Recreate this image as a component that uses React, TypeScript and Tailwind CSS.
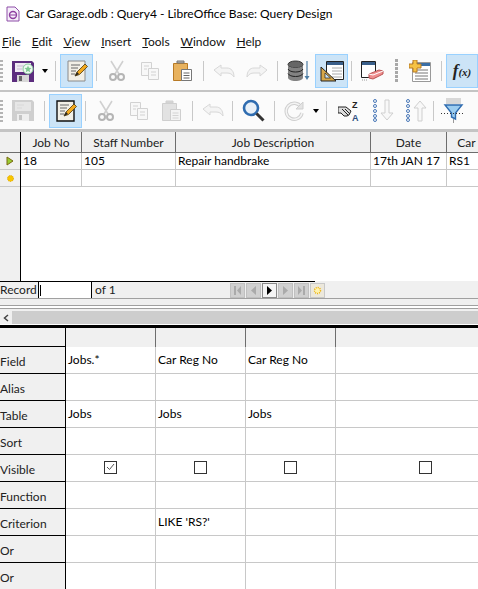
import type { ReactNode } from "react";

const font = "font-['Lato','Open_Sans',sans-serif]";

function Slot({ w, active, children }: { w: string; active?: boolean; children?: ReactNode }) {
  return (
    <div
      className={`${w} h-[34px] shrink-0 flex items-center justify-center ${
        active ? "bg-[#cce4f7] outline outline-1 -outline-offset-1 outline-[#99d1ff]" : ""
      }`}
    >
      {children}
    </div>
  );
}

function Sep({ w }: { w: string }) {
  return (
    <div className={`${w} shrink-0 flex justify-center`}>
      <div className="w-px h-[20px] bg-[#c8c8c8]" />
    </div>
  );
}

function Drop({ w }: { w: string }) {
  return (
    <div className={`${w} shrink-0 flex justify-center`}>
      <div className="w-0 h-0 border-x-[3.5px] border-x-transparent border-t-[4px] border-t-black" />
    </div>
  );
}

function Grip() {
  return (
    <div className="w-[6px] shrink-0 flex flex-col gap-[2px] items-start">
      {[0, 1, 2, 3, 4, 5].map((i) => (
        <div key={i} className="w-[3px] h-[2px] bg-[#b4b4b4]" />
      ))}
    </div>
  );
}

function SaveIcon({ dim }: { dim?: boolean }) {
  const body = dim ? "#cfcfcf" : "#5c2d7e";
  return (
    <svg width="24" height="23" viewBox="0 0 24 23">
      <path d="M1 1h20l2 2v19H1z" fill={body} />
      <rect x="4" y="3" width="16" height="9" fill={dim ? "#e6e6e6" : "#efeaf2"} />
      <path d="M6 6h7M6 9h5" stroke={dim ? "#d8d8d8" : "#c9bcd4"} />
      <rect x="6" y="15" width="12" height="7" fill={dim ? "#eeeeee" : "#d8d8d8"} />
      <rect x="8" y="16" width="3" height="5" fill={dim ? "#c4c4c4" : "#666"} />
      {!dim && (
        <>
          <circle cx="17" cy="9" r="5" fill="#f0faf2" stroke="#86cc9a" />
          <path d="M17 5.500l1 2.300 2.500.3-1.900 1.700.5 2.500-2.100-1.300-2.200 1.300.5-2.500-1.800-1.700 2.500-.3z" fill="#7fc893" />
        </>
      )}
    </svg>
  );
}

function EditIcon({ dark }: { dark?: boolean }) {
  return (
    <svg width="22" height="24" viewBox="0 0 22 24">
      <path d="M2 2h17v20H2z" fill="#f2efe6" stroke={dark ? "#111" : "#8a8a8a"} strokeWidth={dark ? 1.4 : 1} />
      <path d="M5 6h9M5 9h7M5 12h5M5 15h4" stroke="#666" />
      <path d="M9 17l2-4 8-8 2.500 2.500-8 8z" fill="#f2a81d" stroke="#4a3a10" strokeWidth=".8" />
      <path d="M9 17l2-4 2 2z" fill="#222" />
    </svg>
  );
}

function Scissors() {
  return (
    <svg width="18" height="22" viewBox="0 0 18 22" fill="none" stroke="#d0d0d0" strokeWidth="1.600">
      <path d="M3 1l8 13M15 1L7 14" />
      <circle cx="5" cy="17" r="3" stroke="#b5b5b5" strokeWidth="2" />
      <circle cx="13" cy="17" r="3" stroke="#b5b5b5" strokeWidth="2" />
    </svg>
  );
}

function CopyIcon() {
  return (
    <svg width="20" height="20" viewBox="0 0 20 20" fill="#f8f8f8" stroke="#d2d2d2">
      <path d="M1.500 1.500h10v13h-10z" />
      <path d="M8.500 7.500h10v11h-10z" />
      <path d="M4 5h5M4 8h3M11 11h5M11 14h5" />
    </svg>
  );
}

function PasteIcon({ dim }: { dim?: boolean }) {
  return (
    <svg width="21" height="22" viewBox="0 0 21 22">
      <path d="M1.500 3.500h14v17h-14z" fill={dim ? "#e2e2e2" : "#e8b25e"} stroke={dim ? "#cfcfcf" : "#b87a25"} />
      <path d="M5 3h7V1H5z" fill={dim ? "#d8d8d8" : "#bbb"} stroke={dim ? "#cfcfcf" : "#777"} />
      <path d="M9.500 9.500h10v11h-10z" fill={dim ? "#f4f4f4" : "#fff"} stroke={dim ? "#cfcfcf" : "#777"} />
      <path d="M11.500 13h6M11.500 15.500h6M11.500 18h6" stroke={dim ? "#d4d4d4" : "#666"} />
    </svg>
  );
}

function ArrowIcon({ flip }: { flip?: boolean }) {
  return (
    <svg width="22" height="15" viewBox="0 0 22 15" className={flip ? "-scale-x-100" : ""}>
      <path d="M1 6l7-5v3h6c4 0 7 3 7 9-2-3-4-4-7-4H8v3z" fill="#f4f4f4" stroke="#d8d8d8" />
    </svg>
  );
}

function DbIcon() {
  return (
    <svg width="23" height="22" viewBox="0 0 23 22">
      <ellipse cx="8.500" cy="4.500" rx="7.500" ry="3.500" fill="#666" stroke="#333" />
      <path d="M1 4.500v13c0 2 3.500 3.500 7.500 3.500s7.500-1.500 7.500-3.500v-13c0 2-3.500 3.500-7.500 3.500S1 6.500 1 4.500z" fill="#828282" />
      <path d="M1 9c1 2 4 3 7.500 3s6.500-1 7.500-3M1 13.500c1 2 4 3 7.500 3s6.500-1 7.500-3" fill="none" stroke="#222" />
      <path d="M20 1v17" stroke="#4d7ea5" strokeWidth="1.200" />
      <path d="M17.500 16h5L20 20z" fill="#4d7ea5" />
    </svg>
  );
}

function DesignIcon() {
  return (
    <svg width="24" height="22" viewBox="0 0 24 22">
      <path d="M6.500 1.500h17v18h-17z" fill="#fff" stroke="#222" />
      <path d="M7 2h16v3H7z" fill="#3a5f8a" />
      <path d="M12 8h10M12 11h10M12 14h10M12 17h10" stroke="#aaa" />
      <path d="M1 21V7l15 14z" fill="#d8a84a" stroke="#222" />
      <path d="M5 18v-5l5.500 5z" fill="#cce4f7" stroke="#222" strokeWidth=".7" />
    </svg>
  );
}

function EraseIcon() {
  return (
    <svg width="24" height="22" viewBox="0 0 24 22">
      <path d="M1.500 1.500h14v16h-14z" fill="#fff" stroke="#222" />
      <path d="M2 2h13v3H2z" fill="#3a5f8a" />
      <path d="M9 14l10-4 4 1v3l-10 5-4-1z" fill="#ee8d8d" stroke="#b55" />
      <path d="M9 14l4 1 10-4" fill="none" stroke="#fff" />
      <path d="M2 20h6" stroke="#999" strokeDasharray="1 1" />
    </svg>
  );
}

function TableAddIcon() {
  return (
    <svg width="22" height="22" viewBox="0 0 22 22">
      <path d="M3.500 2.500h18v19h-18z" fill="#fff" stroke="#999" />
      <path d="M4 3h17v3H4z" fill="#3a6ea5" />
      <path d="M6 10h13M6 13h13M6 16h13M6 19h13" stroke="#777" />
      <path d="M4 0h4v4h4v4H8v4H4V8H0V4h4z" fill="#f5c244" stroke="#b87a25" />
    </svg>
  );
}

function SearchIcon() {
  return (
    <svg width="23" height="23" viewBox="0 0 23 23" fill="none">
      <circle cx="9" cy="9" r="7" fill="#e8f0f8" stroke="#2f6cb0" strokeWidth="2.600" />
      <path d="M14.500 14.500l7 7" stroke="#333" strokeWidth="3" />
    </svg>
  );
}

function RefreshIcon() {
  return (
    <svg width="20" height="20" viewBox="0 0 20 20" fill="none">
      <path d="M17 6a8 8 0 1 0 1 6" stroke="#cfcfcf" strokeWidth="3.400" />
      <path d="M17 6a8 8 0 1 0 1 6" stroke="#f4f4f4" strokeWidth="1.400" />
      <path d="M19 1v7h-7z" fill="#e4e4e4" stroke="#cfcfcf" />
    </svg>
  );
}

function SortIcon() {
  return (
    <svg width="22" height="22" viewBox="0 0 22 22">
      <path d="M0 7h8l5 4-1 2-1 2-2 1H6L3 13H0z" fill="#dcdcdc" stroke="#222" />
      <path d="M4 9l6 6M7 9l5 5" stroke="#222" />
      <text x="14" y="8" fontSize="9" fontWeight="700" fill="#222" fontFamily="Liberation Sans">Z</text>
      <text x="14" y="21" fontSize="9" fontWeight="700" fill="#2f4f7f" fontFamily="Liberation Sans">A</text>
    </svg>
  );
}

function OrderIcon({ up }: { up?: boolean }) {
  return (
    <svg width="22" height="23" viewBox="0 0 22 23" fill="none">
      {[2, 7, 12, 17, 21].map((y) => (
        <circle key={y} cx="3" cy={y} r="1.500" stroke="#4a78b8" />
      ))}
      <path
        d={up ? "M15 2l6 7h-4v13h-4V9H9z" : "M15 21l6-7h-4V1h-4v13H9z"}
        fill="#f8f8f8"
        stroke="#cfcfcf"
      />
    </svg>
  );
}

function FilterIcon() {
  return (
    <svg width="24" height="25" viewBox="0 0 24 25">
      <path d="M5 0h15v6H5z" fill="#d8d8d8" />
      <path d="M4 7h17l-6.500 8v6l-4-2v-4z" fill="#9ccdf0" stroke="#2f6cb0" strokeWidth="1.400" />
      <path d="M0 15.500h24" stroke="#333" strokeDasharray="1 2" />
      <path d="M12.500 21v4" stroke="#999" />
    </svg>
  );
}

function Toolbars() {
  return (
    <div className="bg-[#fbfbfb]">
      <div className="h-[40px] flex items-center border-b-2 border-[#c4c4c4]">
        <Grip />
        <Slot w="w-[34px]"><SaveIcon /></Slot>
        <Drop w="w-[10px]" />
        <Sep w="w-[10px]" />
        <Slot w="w-[33px]" active><EditIcon /></Slot>
        <Sep w="w-[7px]" />
        <Slot w="w-[33px]"><Scissors /></Slot>
        <Slot w="w-[33px]"><CopyIcon /></Slot>
        <Slot w="w-[33px]"><PasteIcon /></Slot>
        <Sep w="w-[8px]" />
        <Slot w="w-[33px]"><ArrowIcon /></Slot>
        <Slot w="w-[33px]"><ArrowIcon flip /></Slot>
        <Sep w="w-[8px]" />
        <Slot w="w-[34px]"><DbIcon /></Slot>
        <Slot w="w-[33px]" active><DesignIcon /></Slot>
        <Sep w="w-[6px]" />
        <Slot w="w-[36px]"><EraseIcon /></Slot>
        <div className="w-[12px] shrink-0 flex justify-center">
          <div className="w-[3px] h-[24px] bg-[repeating-linear-gradient(#a8a8a8_0_3px,transparent_3px_4px)]" />
        </div>
        <Slot w="w-[35px]"><TableAddIcon /></Slot>
        <Sep w="w-[9px]" />
        <Slot w="w-[32px]" active>
          <span className="font-['Liberation_Serif',serif] italic font-bold text-[17px] text-[#222] whitespace-nowrap">
            f<span className="text-[11px]">(x)</span>
          </span>
        </Slot>
      </div>
      <div className="h-[40px] flex items-center border-b-[3px] border-[#c4c4c4]">
        <Grip />
        <Slot w="w-[33px]"><SaveIcon dim /></Slot>
        <Sep w="w-[10px]" />
        <Slot w="w-[33px]" active><EditIcon dark /></Slot>
        <Sep w="w-[7px]" />
        <Slot w="w-[33px]"><Scissors /></Slot>
        <Slot w="w-[33px]"><CopyIcon /></Slot>
        <Slot w="w-[33px]"><PasteIcon dim /></Slot>
        <Sep w="w-[8px]" />
        <Slot w="w-[33px]"><ArrowIcon /></Slot>
        <Sep w="w-[7px]" />
        <Slot w="w-[34px]"><SearchIcon /></Slot>
        <Sep w="w-[8px]" />
        <Slot w="w-[32px]"><RefreshIcon /></Slot>
        <Drop w="w-[11px]" />
        <Sep w="w-[10px]" />
        <Slot w="w-[35px]"><SortIcon /></Slot>
        <Slot w="w-[33px]"><OrderIcon /></Slot>
        <Slot w="w-[33px]"><OrderIcon up /></Slot>
        <Sep w="w-[2px]" />
        <Slot w="w-[38px]"><FilterIcon /></Slot>
      </div>
    </div>
  );
}

const cols = [
  { label: "Job No", w: "w-[61px]", value: "18" },
  { label: "Staff Number", w: "w-[94px]", value: "105" },
  { label: "Job Description", w: "w-[195px]", value: "Repair handbrake" },
  { label: "Date", w: "w-[76px]", value: "17th JAN 17" },
  { label: "Car", w: "w-[40px]", value: "RS1" },
];

function Results() {
  return (
    <div className="h-[149px] flex overflow-hidden">
      <div className="w-[21px] shrink-0 border-r border-black bg-[#f0f0f0] flex flex-col">
        <div className="h-[21px] border-b border-[#6d6d6d]" />
        <div className="h-[17px] border-b border-[#c8c8c8] flex items-center justify-center">
          <svg width="8" height="10" viewBox="0 0 8 10">
            <path d="M1 1l6 4-6 4z" fill="#9acd32" stroke="#7a6a10" />
          </svg>
        </div>
        <div className="h-[17px] border-b border-[#c8c8c8] flex items-center justify-center">
          <svg width="9" height="9" viewBox="0 0 9 9">
            <circle cx="4.500" cy="4.500" r="3" fill="#f7c600" stroke="#e0a000" strokeDasharray="1 1" />
          </svg>
        </div>
      </div>
      <div className="flex-1 min-w-0 flex overflow-hidden">
        {cols.map((c) => (
          <div key={c.label} className={`${c.w} shrink-0`}>
            <div className="h-[21px] pt-[1px] bg-[#f0f0f0] border-r border-b border-[#6d6d6d] flex items-center justify-center text-[12px] text-[#222] whitespace-nowrap">
              {c.label}
            </div>
            <div className="h-[17px] border-r border-b border-[#c8c8c8] pl-[2px] flex items-center text-[12px] text-black whitespace-nowrap">
              {c.value}
            </div>
            <div className="h-[17px] border-r border-b border-[#c8c8c8]" />
          </div>
        ))}
      </div>
    </div>
  );
}

function NavBtn({ on, children, star }: { on?: boolean; star?: boolean; children: ReactNode }) {
  const tone = on
    ? "border-[#8a8a8a] bg-[#f4f4f4]"
    : star
      ? "border-[#c8c8c8] bg-[#ece8dc]"
      : "border-[#c0c0c0] bg-[#d0d0d0]";
  return <div className={`w-[15px] h-[15px] flex items-center justify-center border ${tone}`}>{children}</div>;
}

function RecordBar() {
  return (
    <div className="h-[18px] bg-[#f0f0f0] border-b border-[#a0a0a0] text-[12px] text-[#222]">
      <div className="h-[17px] w-[315px] flex items-center border-t border-black">
        <span className="w-[38px] shrink-0 whitespace-nowrap">Record</span>
        <div className="w-[54px] h-full shrink-0 bg-white border-x border-black flex items-center pl-px">
          <div className="w-px h-[11px] bg-black" />
        </div>
        <span className="ml-[3px] w-[135px] shrink-0">of 1</span>
        <div className="flex gap-px">
          <NavBtn>
            <svg width="7" height="9" viewBox="0 0 7 9"><path d="M0 0h2v9H0zM7 0v9L3 4.500z" fill="#aaa" /></svg>
          </NavBtn>
          <NavBtn>
            <svg width="5" height="9" viewBox="0 0 5 9"><path d="M5 0v9L0 4.500z" fill="#aaa" /></svg>
          </NavBtn>
          <NavBtn on>
            <svg width="5" height="9" viewBox="0 0 5 9"><path d="M0 0v9l5-4.500z" fill="#000" /></svg>
          </NavBtn>
          <NavBtn>
            <svg width="5" height="9" viewBox="0 0 5 9"><path d="M0 0v9l5-4.500z" fill="#aaa" /></svg>
          </NavBtn>
          <NavBtn>
            <svg width="7" height="9" viewBox="0 0 7 9"><path d="M0 0v9l4-4.500zM5 0h2v9H5z" fill="#aaa" /></svg>
          </NavBtn>
          <NavBtn star>
            <svg width="9" height="9" viewBox="0 0 9 9">
              <circle cx="4.500" cy="4.500" r="3" fill="#fff3b0" stroke="#eeb000" strokeWidth="1.400" strokeDasharray="1 1" />
            </svg>
          </NavBtn>
        </div>
      </div>
    </div>
  );
}

const rows: { label: string; cells: string[] }[] = [
  { label: "Field", cells: ["Jobs.*", "Car Reg No", "Car Reg No", ""] },
  { label: "Alias", cells: ["", "", "", ""] },
  { label: "Table", cells: ["Jobs", "Jobs", "Jobs", ""] },
  { label: "Sort", cells: ["", "", "", ""] },
  { label: "Visible", cells: ["", "", "", ""] },
  { label: "Function", cells: ["", "", "", ""] },
  { label: "Criterion", cells: ["", "LIKE 'RS?'", "", ""] },
  { label: "Or", cells: ["", "", "", ""] },
  { label: "Or", cells: ["", "", "", ""] },
];

const cellWidths = ["w-[90px]", "w-[90px]", "w-[90px]", "w-[180px]"];

function CheckBox({ checked }: { checked: boolean }) {
  return (
    <div className="w-[13px] h-[13px] -mt-[2px] border border-[#333] bg-white flex items-center justify-center">
      {checked && (
        <svg width="9" height="8" viewBox="0 0 9 8" fill="none">
          <path d="M1 4l2.500 2.500L8 1" stroke="#555" />
        </svg>
      )}
    </div>
  );
}

function DesignGrid() {
  return (
    <div className="h-[261px] overflow-hidden text-[12px]">
      <div className="h-[19px] flex bg-[#f0f0f0]">
        <div className="w-[66px] shrink-0 border-r border-black border-b" />
        {cellWidths.map((w, i) => (
          <div key={i} className={`${w} shrink-0 border-r border-[#6d6d6d]`} />
        ))}
      </div>
      {rows.map((r, idx) => (
        <div key={idx} className="h-[27px] flex">
          <div className="w-[66px] shrink-0 bg-[#f0f0f0] border-r border-b border-black flex items-end pb-[2px] text-[#222]">
            <span>{r.label}</span>
          </div>
          {cellWidths.map((w, i) => (
            <div
              key={i}
              className={`${w} shrink-0 border-r border-b border-[#c8c8c8] flex items-center text-black ${
                r.label === "Visible" ? "justify-center" : "pl-[2px]"
              }`}
            >
              {r.label === "Visible" ? <CheckBox checked={i === 0} /> : r.cells[i]}
            </div>
          ))}
        </div>
      ))}
    </div>
  );
}

export default function App() {
  return (
    <div className={`w-[478px] h-[589px] overflow-hidden bg-white ${font}`}>
      <div className="h-[28px] flex items-center gap-[6px] pl-[6px] text-[12px] text-black">
        <svg width="14" height="16" viewBox="0 0 14 16">
          <path d="M1 1h8l4 4v10H1z" fill="#f6eefa" stroke="#8e4fa8" />
          <circle cx="7" cy="9" r="3.500" fill="none" stroke="#8e3fa0" strokeWidth="1.400" />
          <path d="M4 9h6" stroke="#8e3fa0" />
        </svg>
        <span className="whitespace-nowrap">Car Garage.odb : Query4 - LibreOffice Base: Query Design</span>
      </div>
      <div className="h-[24px] pt-[3px] flex items-center gap-[11px] pl-[2px] text-[12px] text-[#111]">
        <span><u>F</u>ile</span>
        <span><u>E</u>dit</span>
        <span><u>V</u>iew</span>
        <span><u>I</u>nsert</span>
        <span><u>T</u>ools</span>
        <span><u>W</u>indow</span>
        <span><u>H</u>elp</span>
      </div>
      <Toolbars />
      <Results />
      <RecordBar />
      <div className="h-[12px] bg-[#f0f0f0]">
        <div className="h-[6px]" />
        <div className="h-[4px] bg-white border-y border-[#a0a0a0]" />
      </div>
      <div className="h-[14px] flex bg-[#f0f0f0] border-b border-white">
        <div className="w-[12px] shrink-0 flex items-center justify-center">
          <svg width="6" height="8" viewBox="0 0 6 8" fill="none">
            <path d="M5 1L1.500 4 5 7" stroke="#444" strokeWidth="1.500" />
          </svg>
        </div>
        <div className="flex-1 bg-[#cdcdcd]" />
      </div>
      <div className="h-[3px] bg-black" />
      <DesignGrid />
    </div>
  );
}
